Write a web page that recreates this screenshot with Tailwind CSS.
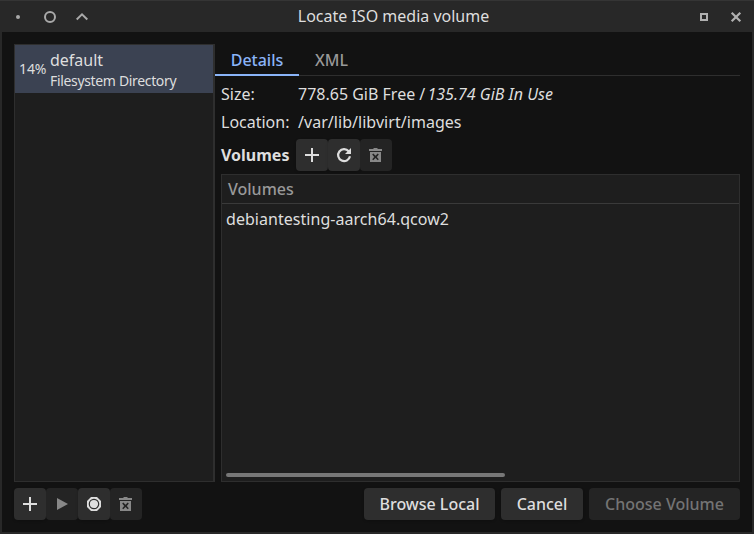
<!DOCTYPE html>
<html lang="en">
<head>
<meta charset="utf-8">
<title>Locate ISO media volume</title>
<script src="https://cdn.jsdelivr.net/npm/@tailwindcss/browser@4"></script>
</head>
<body class="w-[754px] h-[534px] overflow-hidden bg-[#282828] font-['Noto_Sans',sans-serif] text-base text-[#dedede] flex flex-col">
<svg class="hidden">
  <symbol id="plus" viewBox="0 0 16 16"><path d="M7 1h2v6h6v2H9v6H7V9H1V7h6z" fill="currentColor"/></symbol>
  <symbol id="trash" viewBox="0 0 16 16"><path d="M1 2h4l1-1h3l1 1h4v2H1z" fill="currentColor"/><path fill-rule="evenodd" d="M2 5h11v10H2zM4.2 7.6L6.2 9.9 4.2 12.2 5.3 13.2 7.5 11 9.7 13.2 10.8 12.2 8.8 9.9 10.8 7.6 9.7 6.6 7.5 8.8 5.3 6.6z" fill="currentColor"/></symbol>
</svg>
<header class="h-8 shrink-0 border-t border-[#353535] grid grid-cols-[1fr_auto_1fr] items-center">
  <div class="flex gap-4 pl-[10px] text-[#a9a9a9]">
    <svg class="size-4" viewBox="0 0 16 16"><circle cx="8" cy="8" r="2" fill="currentColor"/></svg>
    <svg class="size-4" viewBox="0 0 16 16"><circle cx="8" cy="8" r="5" fill="none" stroke="currentColor" stroke-width="2"/></svg>
    <svg class="size-4" viewBox="0 0 16 16"><path d="M2.7 10.5L8 5.4l5.3 5.1" fill="none" stroke="currentColor" stroke-width="2"/></svg>
  </div>
  <h1 class="pl-[33px] pb-[2px] leading-6">Locate ISO media volume</h1>
  <div class="flex gap-4 justify-end pr-[10px] text-[#b0b0b0]">
    <svg class="size-4" viewBox="0 0 16 16"><path d="M5 5h6v6H5z" fill="none" stroke="currentColor" stroke-width="2"/></svg>
    <svg class="size-4" viewBox="0 0 16 16"><path d="M3.7 3.7l8.6 8.6M12.3 3.7l-8.6 8.6" fill="none" stroke="currentColor" stroke-width="2.2"/></svg>
  </div>
</header>
<main class="h-[500px] mx-[2px] bg-[#121212] px-3 pt-3 pb-3 flex flex-col gap-[6px]">
  <div class="h-[438px] flex">
    <aside class="w-[201px] shrink-0 border border-r-2 border-[#2e2e2e] bg-[#1e1e1e]">
      <div class="h-12 bg-[#3b4252] flex items-center pl-1">
        <span class="w-[31px] text-sm tracking-[-0.1px]">14%</span>
        <div>
          <p class="leading-[22px]">default</p>
          <p class="text-sm leading-[19px] tracking-[-0.34px] whitespace-nowrap">Filesystem Directory</p>
        </div>
      </div>
    </aside>
    <section class="flex-1 flex flex-col">
      <nav class="h-8 flex shadow-[inset_0_-1px_#2e2e2e] leading-8">
        <span class="w-[84px] text-center text-[#8ab4f8] font-medium border-b-2 border-[#8ab4f8]">Details</span>
        <span class="pl-4 text-[#999] font-medium">XML</span>
      </nav>
      <div class="pl-[6px] pt-[6px] flex-1 flex flex-col">
        <dl class="grid grid-cols-[77px_1fr] gap-y-1 leading-6">
          <dt>Size:</dt><dd>778.65 GiB Free / <i class="-ml-[2px]">135.74 GiB In Use</i></dd>
          <dt>Location:</dt><dd class="tracking-[0.04px]">/var/lib/libvirt/images</dd>
        </dl>
        <div class="mt-[5px] h-8 flex items-center">
          <b class="w-[75px]">Volumes</b>
          <button class="size-8 rounded-[4px] bg-[#2e2e2e] shadow-sm flex items-center justify-center"><svg class="size-4"><use href="#plus"/></svg></button>
          <button class="size-8 rounded-[4px] bg-[#2e2e2e] shadow-sm flex items-center justify-center"><svg class="size-4" viewBox="0 0 16 16"><path d="M12.7 4.2A6 6 0 1 0 14 9.3" fill="none" stroke="currentColor" stroke-width="2.2"/><path d="M15 1v6H9z" fill="currentColor"/></svg></button>
          <button class="size-8 rounded-[4px] bg-[#242424] text-[#888] flex items-center justify-center"><svg class="size-4"><use href="#trash"/></svg></button>
        </div>
        <div class="mt-[3px] flex-1 border border-[#2e2e2e] bg-[#1e1e1e] flex flex-col">
          <div class="h-[29px] border-b border-[#3a3a3a] pl-[6px] leading-7 text-[#999] font-medium">Volumes</div>
          <div class="pl-1 leading-[31px] tracking-[0.04px]">debiantesting-aarch64.qcow2</div>
          <div class="mt-auto mb-1 ml-1 w-[279px] h-1 rounded-full bg-[#777]"></div>
        </div>
      </div>
    </section>
  </div>
  <footer class="h-8 flex font-medium">
    <button class="size-8 rounded-[4px] bg-[#2e2e2e] shadow-sm flex items-center justify-center"><svg class="size-4"><use href="#plus"/></svg></button>
    <button class="size-8 rounded-[4px] bg-[#242424] text-[#888] flex items-center justify-center"><svg class="size-4" viewBox="0 0 16 16"><path d="M3 2l11 6-11 6z" fill="currentColor"/></svg></button>
    <button class="size-8 rounded-[4px] bg-[#2e2e2e] shadow-sm flex items-center justify-center"><svg class="size-4" viewBox="0 0 16 16"><path d="M5 1h6l4 4v6l-4 4H5l-4-4V5z" fill="currentColor"/><circle cx="8" cy="8" r="4.7" fill="none" stroke="#2e2e2e" stroke-width="1.2"/></svg></button>
    <button class="size-8 rounded-[4px] bg-[#242424] text-[#888] flex items-center justify-center"><svg class="size-4"><use href="#trash"/></svg></button>
    <div class="ml-auto flex gap-[6px]">
      <button class="w-[131px] rounded-[4px] bg-[#2e2e2e] shadow-sm whitespace-nowrap">Browse Local</button>
      <button class="w-[82px] rounded-[4px] bg-[#2e2e2e] shadow-sm">Cancel</button>
      <button class="w-[151px] rounded-[4px] bg-[#242424] text-[#747474] whitespace-nowrap">Choose Volume</button>
    </div>
  </footer>
</main>
</body>
</html>
